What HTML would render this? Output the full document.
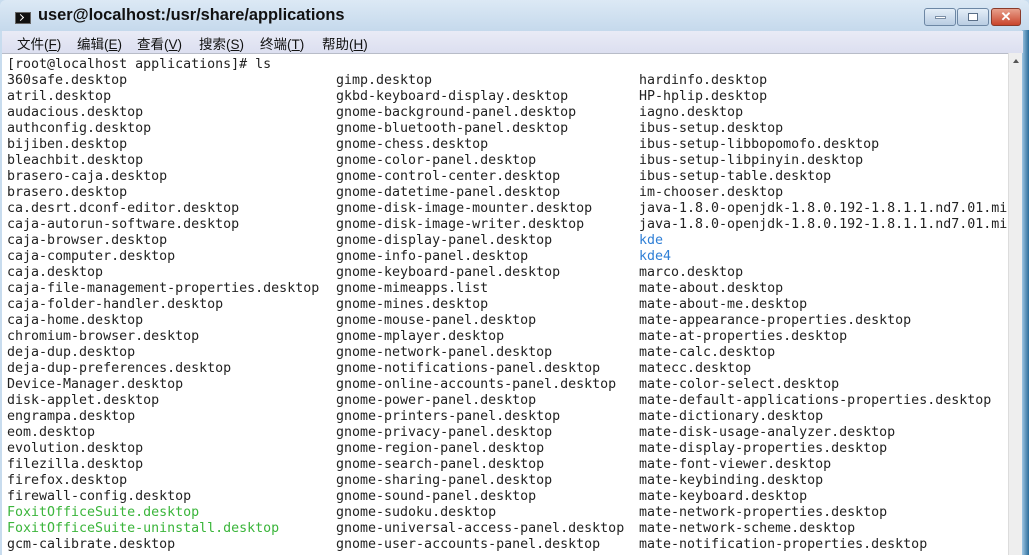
<!DOCTYPE html>
<html><head><meta charset="utf-8"><style>
*{margin:0;padding:0;box-sizing:border-box}
body{width:1029px;height:555px;overflow:hidden;background:#c8dcee;position:relative;font-family:"Liberation Sans","Noto Sans CJK SC",sans-serif}
.title{position:absolute;left:0;top:0;width:1029px;height:31px;background:linear-gradient(#dce9f5,#c5d9ec);border-top-left-radius:6px;border-top-right-radius:6px}
.title .t{position:absolute;left:38px;top:6px;font-size:16.4px;font-weight:bold;color:#111}
.icon{position:absolute;left:15px;top:12px;width:16px;height:12px;background:#111;border:1px solid #666}
.icon:after{content:"";position:absolute;left:2px;top:2px;width:4px;height:4px;border-right:1px solid #fff;border-bottom:1px solid #fff;transform:rotate(-45deg)}
.btn{position:absolute;top:8px;height:18px;border:1px solid #6d87a4;border-radius:3px;background:linear-gradient(#e4eef8,#b9cde2)}
.menu{position:absolute;left:2px;top:31px;width:1021px;height:22px;background:linear-gradient(#e9ebf6,#dcdff0);font-size:13.5px;color:#111}
.menu span{position:absolute;top:2px}
.term{position:absolute;left:2px;top:53px;width:1006px;height:502px;background:#fff;border-top:1px solid #b8bcc8}
pre{position:absolute;left:5px;top:2px;font-family:"DejaVu Sans Mono",monospace;font-size:13.3px;line-height:16px;color:#222}
.g{color:#3bb53b}.b{color:#2f7fd6}
.sb{position:absolute;left:1008px;top:53px;width:14px;height:502px;background:#eeeeee;border-left:1px solid #dcdcdc}
.fr{position:absolute;left:1022px;top:30px;width:7px;height:525px;background:linear-gradient(90deg,#9ec6e4,#2b6c99)}
</style></head><body>
<div class="title"><div class="icon"></div><div class="t">user@localhost:/usr/share/applications</div>
<div class="btn" style="left:924px;width:32px"><div style="position:absolute;left:10px;top:7px;width:11px;height:3px;background:#fff;border:1px solid #7b8ea5"></div></div>
<div class="btn" style="left:957px;width:32px"><div style="position:absolute;left:10px;top:4px;width:10px;height:8px;border:1px solid #5a6f88;background:#fff"></div></div>
<div class="btn" style="left:991px;width:30px;background:linear-gradient(#e8a08c,#c9452c);border-color:#8a3a2a;color:#fff;text-align:center;font-size:13px;font-weight:bold;line-height:16px">✕</div>
</div>
<div class="fr"></div>
<div class="menu"><span style="left:15px">文件(<u>F</u>)</span><span style="left:75px">编辑(<u>E</u>)</span><span style="left:135px">查看(<u>V</u>)</span><span style="left:197px">搜索(<u>S</u>)</span><span style="left:258px">终端(<u>T</u>)</span><span style="left:320px">帮助(<u>H</u>)</span></div>
<div class="term">
<pre style="position:absolute;left:5px;top:3px">[root@localhost applications]# ls</pre>
<pre style="left:5px;top:19px">360safe.desktop
atril.desktop
audacious.desktop
authconfig.desktop
bijiben.desktop
bleachbit.desktop
brasero-caja.desktop
brasero.desktop
ca.desrt.dconf-editor.desktop
caja-autorun-software.desktop
caja-browser.desktop
caja-computer.desktop
caja.desktop
caja-file-management-properties.desktop
caja-folder-handler.desktop
caja-home.desktop
chromium-browser.desktop
deja-dup.desktop
deja-dup-preferences.desktop
Device-Manager.desktop
disk-applet.desktop
engrampa.desktop
eom.desktop
evolution.desktop
filezilla.desktop
firefox.desktop
firewall-config.desktop
<span class="g">FoxitOfficeSuite.desktop</span>
<span class="g">FoxitOfficeSuite-uninstall.desktop</span>
gcm-calibrate.desktop</pre>
<pre style="left:334px;top:19px">gimp.desktop
gkbd-keyboard-display.desktop
gnome-background-panel.desktop
gnome-bluetooth-panel.desktop
gnome-chess.desktop
gnome-color-panel.desktop
gnome-control-center.desktop
gnome-datetime-panel.desktop
gnome-disk-image-mounter.desktop
gnome-disk-image-writer.desktop
gnome-display-panel.desktop
gnome-info-panel.desktop
gnome-keyboard-panel.desktop
gnome-mimeapps.list
gnome-mines.desktop
gnome-mouse-panel.desktop
gnome-mplayer.desktop
gnome-network-panel.desktop
gnome-notifications-panel.desktop
gnome-online-accounts-panel.desktop
gnome-power-panel.desktop
gnome-printers-panel.desktop
gnome-privacy-panel.desktop
gnome-region-panel.desktop
gnome-search-panel.desktop
gnome-sharing-panel.desktop
gnome-sound-panel.desktop
gnome-sudoku.desktop
gnome-universal-access-panel.desktop
gnome-user-accounts-panel.desktop</pre>
<pre style="left:637px;top:19px">hardinfo.desktop
HP-hplip.desktop
iagno.desktop
ibus-setup.desktop
ibus-setup-libbopomofo.desktop
ibus-setup-libpinyin.desktop
ibus-setup-table.desktop
im-chooser.desktop
java-1.8.0-openjdk-1.8.0.192-1.8.1.1.nd7.01.mi
java-1.8.0-openjdk-1.8.0.192-1.8.1.1.nd7.01.mi
<span class="b">kde</span>
<span class="b">kde4</span>
marco.desktop
mate-about.desktop
mate-about-me.desktop
mate-appearance-properties.desktop
mate-at-properties.desktop
mate-calc.desktop
matecc.desktop
mate-color-select.desktop
mate-default-applications-properties.desktop
mate-dictionary.desktop
mate-disk-usage-analyzer.desktop
mate-display-properties.desktop
mate-font-viewer.desktop
mate-keybinding.desktop
mate-keyboard.desktop
mate-network-properties.desktop
mate-network-scheme.desktop
mate-notification-properties.desktop</pre>
</div>
<div class="sb"><div style="position:absolute;left:4px;top:6px;width:0;height:0;border-left:3px solid transparent;border-right:3px solid transparent;border-bottom:4px solid #555"></div></div>
</body></html>
